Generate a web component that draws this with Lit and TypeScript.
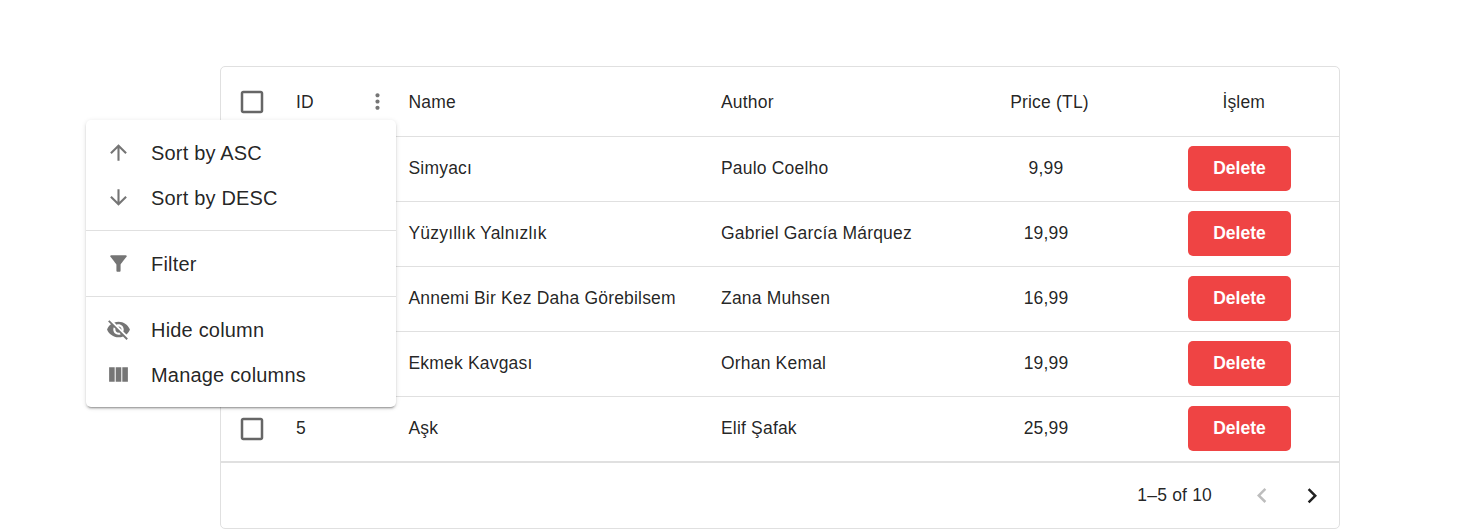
import { LitElement, html, css, svg } from "lit";
import { customElement } from "lit/decorators.js";

const icon = (path: string, cls = "icon") =>
  html`<svg class=${cls} viewBox="0 0 24 24" aria-hidden="true">${svg`<path d=${path}></path>`}</svg>`;

const ICONS = {
  box: "M19 5v14H5V5h14m0-2H5c-1.1 0-2 .9-2 2v14c0 1.1.9 2 2 2h14c1.1 0 2-.9 2-2V5c0-1.1-.9-2-2-2z",
  dots: "M12 8c1.1 0 2-.9 2-2s-.9-2-2-2-2 .9-2 2 .9 2 2 2zm0 2c-1.1 0-2 .9-2 2s.9 2 2 2 2-.9 2-2-.9-2-2-2zm0 6c-1.1 0-2 .9-2 2s.9 2 2 2 2-.9 2-2-.9-2-2-2z",
  up: "M4 12l1.41 1.41L11 7.83V20h2V7.83l5.58 5.59L20 12l-8-8-8 8z",
  down: "M20 12l-1.41-1.41L13 16.17V4h-2v12.17l-5.58-5.59L4 12l8 8 8-8z",
  filter: "M4.25 5.61C6.27 8.2 10 13 10 13v6c0 .55.45 1 1 1h2c.55 0 1-.45 1-1v-6s3.72-4.8 5.74-7.39c.51-.66.04-1.61-.79-1.61H5.04c-.83 0-1.3.95-.79 1.61z",
  hide: "M12 7c2.76 0 5 2.24 5 5 0 .65-.13 1.26-.36 1.83l2.92 2.92c1.51-1.26 2.7-2.89 3.43-4.75-1.73-4.39-6-7.5-11-7.5-1.4 0-2.74.25-3.98.7l2.16 2.16C10.74 7.13 11.35 7 12 7zM2 4.27l2.28 2.28.46.46C3.08 8.3 1.78 10.02 1 12c1.73 4.39 6 7.5 11 7.5 1.55 0 3.03-.3 4.38-.84l.42.42L19.73 22 21 20.73 3.27 3 2 4.27zM7.53 9.8l1.55 1.55c-.05.21-.08.43-.08.65 0 1.66 1.34 3 3 3 .22 0 .44-.03.65-.08l1.55 1.55c-.67.33-1.41.53-2.2.53-2.76 0-5-2.24-5-5 0-.79.2-1.53.53-2.2zm4.31-.78l3.15 3.15.02-.16c0-1.66-1.34-3-3-3l-.17.01z",
  columns: "M14.67 5v14H9.33V5h5.34zm1 14H21V5h-5.33v14zm-7.34 0V5H3v14h5.33z",
  left: "M15.41 16.09l-4.58-4.59 4.58-4.59L14 5.5l-6 6 6 6z",
  right: "M8.59 16.34l4.58-4.59-4.58-4.59L10 5.75l6 6-6 6z",
};

// The open column menu covers the ID column of the first four rows.
const BOOKS = [
  { id: "", name: "Simyacı", author: "Paulo Coelho", price: "9,99" },
  { id: "", name: "Yüzyıllık Yalnızlık", author: "Gabriel García Márquez", price: "19,99" },
  { id: "", name: "Annemi Bir Kez Daha Görebilsem", author: "Zana Muhsen", price: "16,99" },
  { id: "", name: "Ekmek Kavgası", author: "Orhan Kemal", price: "19,99" },
  { id: "5", name: "Aşk", author: "Elif Şafak", price: "25,99" },
];

@customElement("column-menu")
class ColumnMenu extends LitElement {
  static styles = css`
    :host {
      display: block;
      box-sizing: border-box;
      width: 310px;
      padding: 10px 0;
      background: #fff;
      border-radius: 5px;
      box-shadow: 0 3px 1px -2px rgba(0, 0, 0, 0.2), 0 2px 2px 0 rgba(0, 0, 0, 0.14), 0 1px 5px 0 rgba(0, 0, 0, 0.12);
      font-size: 20px;
      letter-spacing: 0.00938em;
      color: rgba(0, 0, 0, 0.87);
    }
    .item {
      display: flex;
      align-items: center;
      gap: 20px;
      height: 45px;
      padding: 0 20px;
      white-space: nowrap;
    }
    .label {
      padding-top: 2px;
    }
    .icon {
      width: 25px;
      height: 25px;
      fill: #757575;
      flex: none;
    }
    .divider {
      height: 1px;
      margin: 10px 0;
      background: #e0e0e0;
    }
  `;
  private item(path: string, label: string) {
    return html`<div class="item" role="menuitem">${icon(path)}<span class="label">${label}</span></div>`;
  }
  render() {
    return html`
      ${this.item(ICONS.up, "Sort by ASC")} ${this.item(ICONS.down, "Sort by DESC")}
      <div class="divider"></div>
      ${this.item(ICONS.filter, "Filter")}
      <div class="divider"></div>
      ${this.item(ICONS.hide, "Hide column")} ${this.item(ICONS.columns, "Manage columns")}
    `;
  }
}

@customElement("app-root")
class AppRoot extends LitElement {
  static styles = css`
    :host {
      display: block;
      position: relative;
      box-sizing: border-box;
      height: 531px;
      padding: 66px 135px 0 220px;
      overflow: hidden;
      background: #fff;
      font-family: "Liberation Sans", Arial, sans-serif;
      font-size: 17.5px;
      letter-spacing: 0.01071em;
      color: rgba(0, 0, 0, 0.87);
    }
    .grid {
      box-sizing: border-box;
      width: 1120px;
      height: 463px;
      border: 1px solid #e0e0e0;
      border-radius: 5px;
    }
    .row {
      box-sizing: border-box;
      display: grid;
      grid-template-columns: 62.5px 112.5px 312.5px 250px 175px 1fr;
      align-items: center;
      height: 65px;
      border-bottom: 1px solid #e0e0e0;
      white-space: nowrap;
    }
    .cell {
      padding: 0 12.5px 2px;
    }
    .check {
      display: flex;
      justify-content: center;
    }
    .price,
    .action {
      display: flex;
      justify-content: center;
      padding-bottom: 2px;
    }
    .action {
      padding-left: 6.5px;
    }
    .head {
      height: 70px;
    }
    .head .cell {
      padding: 2px 12.5px 0;
    }
    .head .id-head {
      display: flex;
      align-items: center;
      justify-content: space-between;
      padding: 0 6.5px 0 12.5px;
    }
    .title {
      padding-top: 2px;
    }
    .head .price {
      padding: 2px 0 0 7px;
    }
    .head .action {
      padding: 2px 0 0 15px;
    }
    .box {
      width: 30px;
      height: 30px;
      fill: #666;
    }
    .icon {
      width: 25px;
      height: 25px;
      fill: #757575;
    }
    .delete {
      width: 103px;
      height: 45px;
      padding: 0;
      border: 0;
      border-radius: 5px;
      background: #ef4444;
      color: #fff;
      font: bold 17.5px "Liberation Sans", Arial, sans-serif;
    }
    .footer {
      box-sizing: border-box;
      display: flex;
      align-items: center;
      justify-content: flex-end;
      height: 66px;
      border-top: 1px solid #e0e0e0;
      padding-right: 12px;
    }
    .range {
      margin-right: 35px;
    }
    .arrow {
      width: 30px;
      height: 30px;
      fill: #212121;
    }
    .arrow.off {
      fill: #bdbdbd;
      margin-right: 20px;
    }
    .menu {
      position: absolute;
      left: 86px;
      top: 120px;
    }
  `;
  render() {
    return html`
      <div class="grid">
        <div class="row head">
          <div class="check">${icon(ICONS.box, "box")}</div>
          <div class="cell id-head"><span class="title">ID</span>${icon(ICONS.dots)}</div>
          <div class="cell">Name</div>
          <div class="cell">Author</div>
          <div class="price">Price (TL)</div>
          <div class="action">İşlem</div>
        </div>
        ${BOOKS.map(
          (b) => html`<div class="row">
            <div class="check">${icon(ICONS.box, "box")}</div>
            <div class="cell">${b.id}</div>
            <div class="cell">${b.name}</div>
            <div class="cell">${b.author}</div>
            <div class="price">${b.price}</div>
            <div class="action"><button class="delete">Delete</button></div>
          </div>`
        )}
        <div class="footer">
          <span class="range">1–5 of 10</span>
          ${icon(ICONS.left, "arrow off")}${icon(ICONS.right, "arrow")}
        </div>
      </div>
      <column-menu class="menu" role="menu"></column-menu>
    `;
  }
}
